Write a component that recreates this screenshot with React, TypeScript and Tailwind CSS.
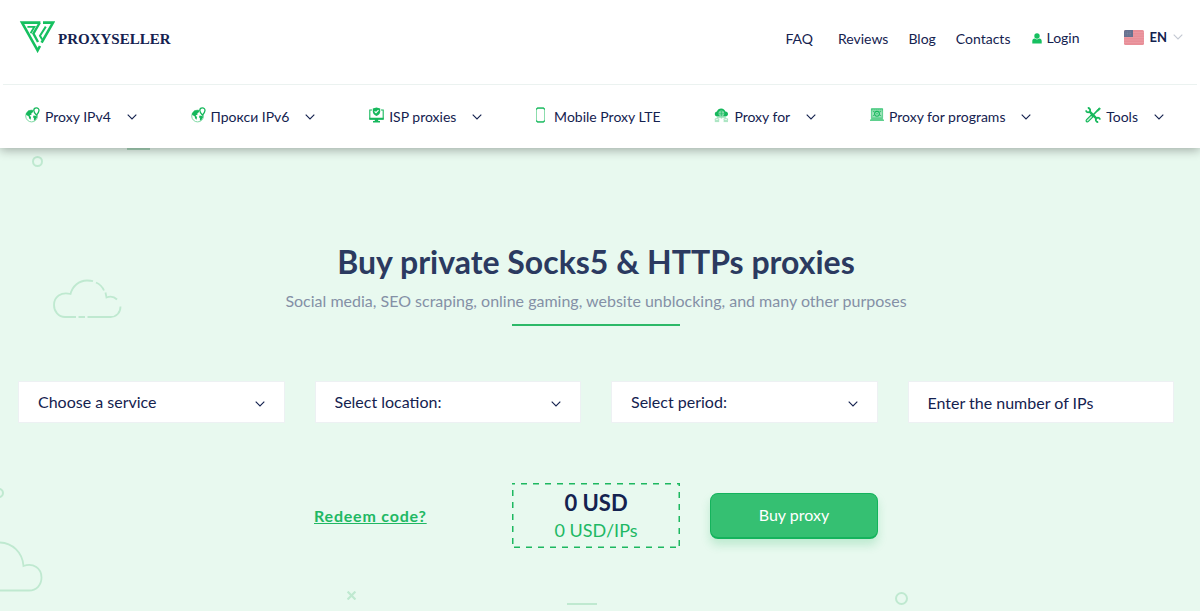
import { useState } from "react"

function Logo(){
    return(
        <svg className="w-9 h-[33px]" viewBox="0 0 36 33" fill="none" stroke="#16c060">
            <path d="M21.4 2.6H3L18.6 30.4L21 26" strokeWidth="2.6" />
            <path d="M8.4 6.8H15.4L11.6 13.2" strokeWidth="1.8" />
            <path d="M20.6 3L14.4 13.6L19 22" strokeWidth="2.4" />
            <path d="M24 2.6H34L22.6 22.6" strokeWidth="2.6" />
            <path d="M26.8 6.6L21 15.8L23.2 19.4" strokeWidth="2" />
        </svg>
    )
}

function Chevron({className}:any){
    return(
        <svg className={className} viewBox="0 0 10 6" fill="none" stroke="currentColor" strokeWidth="1.1">
            <path d="M0.7 0.7L5 5L9.3 0.7" />
        </svg>
    )
}

function GlobeIcon(){
    return(
        <svg className="w-[15px] h-4" viewBox="0 0 15 16">
            <circle cx="6.6" cy="9" r="5.9" fill="none" stroke="#7fd9a4" strokeWidth="1" />
            <path d="M1 6.5L3.4 3.6L7.6 3L8.2 5L6.4 6.2L6.6 7.4L4.6 8.4L6 10L5.6 12.8L4.2 11.4L3.6 9.2L1.2 8Z" fill="#16b85c" />
            <path d="M8.6 8.6L11.4 9L12.2 10L10.4 13L8.8 13.8L9 11.6L8 10Z" fill="#16b85c" />
            <path d="M11.4 0.9C9.8 0.9 8.8 2 8.8 3.4C8.8 5 11.4 8.2 11.4 8.2S14 5 14 3.4C14 2 13 0.9 11.4 0.9Z" fill="#fff" stroke="#16b85c" strokeWidth="1.3" />
        </svg>
    )
}

function IspIcon(){
    return(
        <svg className="w-[15px] h-4" viewBox="0 0 15 16">
            <path d="M3 3H0.8V12H14.2V3H12" fill="none" stroke="#16b85c" strokeWidth="1.1" />
            <path d="M0.4 10.8H14.6V12.8H0.4ZM5.8 12.8H9.2V14H11V15.4H4V14H5.8Z" fill="#16b85c" />
            <path d="M7.500 0.400L11.200 1.600V4.400C11.200 6.600 9.600 8 7.500 8.900C5.400 8 3.800 6.600 3.800 4.400V1.600Z" fill="#16b85c" />
            <path d="M5.6 4.3L7 5.7L9.5 3.1" fill="none" stroke="#fff" strokeWidth="1.1" />
        </svg>
    )
}

function MobileIcon(){
    return(
        <svg className="w-[13px] h-4" viewBox="0 0 13 16">
            <rect x="0.5" y="0.8" width="8" height="14.4" rx="1.2" fill="none" stroke="#7fd9a4" strokeWidth="0.9" />
            <path d="M1.4 0.4H7.6L8.8 1.6V2.8H8L7.4 1.8H1.6L1 2.8H0.2V1.6ZM0.2 13.2H1L1.600 14.2H7.4L8 13.2H8.8V14.6L7.6 15.6H1.4L0.2 14.6Z" fill="#16b85c" />
        </svg>
    )
}

function CloudIcon(){
    return(
        <svg className="w-[15px] h-4" viewBox="0 0 15 16">
            <path d="M3.4 9.4C1.6 9.4 0.8 8.2 0.8 7C0.8 5.6 1.8 4.8 3 4.6C3.4 2.6 5.2 1.4 7.2 1.4C9.4 1.4 11 2.8 11.4 4.6C13 4.6 14 5.6 14 7C14 8.4 13 9.4 11.4 9.4Z" fill="#16b85c" />
            <circle cx="7.4" cy="6.4" r="2.8" fill="#a6e4bf" />
            <path d="M4.6 6.4H10.2M7.4 3.6V9.2M5.200 4.9H9.6M5.2 7.9H9.6" stroke="#16b85c" strokeWidth="0.6" />
            <path d="M7.4 9.6V11.6M3 11.6V10.600H11.8V11.6" fill="none" stroke="#8fdcae" strokeWidth="0.8" />
            <path d="M1.2 11.8H4.8V13.6H1.2ZM10 11.8H13.6V13.6H10ZM0.8 14.6H5.2M9.6 14.6H14" fill="none" stroke="#8fdcae" strokeWidth="0.8" />
        </svg>
    )
}

function LaptopIcon(){
    return(
        <svg className="w-[14px] h-4" viewBox="0 0 14 16">
            <path d="M1.4 1.6H12.6V10.8H1.4Z" fill="#9ee2b9" stroke="#3ec679" strokeWidth="0.8" />
            <path d="M1.4 2.8H12.6" stroke="#16b85c" strokeWidth="0.9" strokeDasharray="1.4 0.6" />
            <circle cx="7" cy="6.8" r="2.4" fill="none" stroke="#16b85c" strokeWidth="1.1" />
            <circle cx="7" cy="6.8" r="0.7" fill="#16b85c" />
            <path d="M2.6 9L4.4 7.8M11.4 9L9.6 7.8M2.8 4.6H4.4M9.6 4.6H11.2" stroke="#16b85c" strokeWidth="0.8" />
            <path d="M1.4 11H12.6L14 13.2V14H0V13.2Z" fill="#5fd08e" />
        </svg>
    )
}

function ToolsIcon(){
    return(
        <svg className="w-4 h-4" viewBox="0 0 16 16" fill="none" stroke="#16b85c">
            <path d="M4.4 4.4L11.8 11.8" strokeWidth="2.4" />
            <path d="M1 3.4C1.2 4.8 2.4 5.6 3.8 5.2C5 4.8 5.4 3.6 5 2.4C4.6 1.4 3.6 0.9 2.8 1" strokeWidth="1.8" />
            <path d="M15 12.6C14.8 11.2 13.6 10.4 12.2 10.8C11 11.2 10.6 12.4 11 13.6C11.4 14.6 12.4 15.1 13.2 15" strokeWidth="1.8" />
            <path d="M6.8 9.2L12.6 3.4" strokeWidth="1.6" />
            <path d="M12 4L12.4 2.6L14.4 0.8L15.4 1.8L13.6 3.8Z" fill="#16b85c" strokeWidth="0.8" />
            <path d="M6.2 8L8 9.8L3.4 14.4C2.8 15 2 15 1.5 14.5S1 13.2 1.6 12.6Z" fill="#c9f0d8" strokeWidth="1.2" />
        </svg>
    )
}

function Flag(){
    return(
        <svg className="w-5 h-[15px]" viewBox="0 0 20 15">
            <rect width="20" height="15" rx="1.5" fill="#e88f98" />
            <path d="M0 2.5H20M0 5H20M0 7.5H20M0 10H20M0 12.5H20" stroke="#eb9ca4" strokeWidth="0.8" />
            <path d="M0 1.5Q0 0 1.5 0H9V7H0Z" fill="#65708f" />
            <path d="M1.5 2H8M1.5 3.5H8M1.5 5H8" stroke="#8993ab" strokeWidth="0.6" strokeDasharray="0.8 0.8" />
        </svg>
    )
}

function TopBar(){
    return(
        <div className="mx-[3px] flex h-[85px] items-start justify-between border-b border-[#ebf2f0] pl-4 pr-[14px]">
            <a className="mt-5 flex items-center gap-[3px]" href="#">
                <Logo />
                <span className="pt-1 font-['Liberation_Serif',serif] text-[15px] font-bold leading-5">PROXYSELLER</span>
            </a>
            <div className="mt-[27px] flex items-start text-sm leading-5">
                <nav className="mt-[2px] flex gap-5">
                    <a className="mr-[5px]" href="#">FAQ</a>
                    <a href="#">Reviews</a>
                    <a href="#">Blog</a>
                    <a href="#">Contacts</a>
                </nav>
                <a className="ml-[22px] mt-px flex items-center gap-1" href="#">
                    <svg className="w-[10px] h-[11px]" viewBox="0 0 10 11" fill="#16c060">
                        <circle cx="5" cy="3" r="2.7" />
                        <path d="M0.3 10.4V8C0.3 6.6 1.2 5.8 2.6 5.6C3.9 6.7 6.1 6.7 7.4 5.6C8.8 5.8 9.7 6.6 9.7 8V10.4Z" />
                    </svg>
                    Login
                </a>
                <button className="ml-11 flex cursor-pointer items-center gap-[6px] text-[13px] font-bold">
                    <Flag />
                    EN
                    <Chevron className="w-[10px] h-[6px] text-[#c3c8d2]" />
                </button>
            </div>
        </div>
    )
}

const menu = [
    {label: "Proxy IPv4", icon: GlobeIcon, arrow: true},
    {label: "Прокси IPv6", icon: GlobeIcon, arrow: true},
    {label: "ISP proxies", icon: IspIcon, arrow: true},
    {label: "Mobile Proxy LTE", icon: MobileIcon, arrow: false},
    {label: "Proxy for", icon: CloudIcon, arrow: true},
    {label: "Proxy for programs", icon: LaptopIcon, arrow: true},
    {label: "Tools", icon: ToolsIcon, arrow: true},
]

function MainMenu(){
    return(
        <nav className="flex h-[63px] items-center justify-between pl-[25px] pr-9 text-sm leading-5">
            {menu.map(({label, icon: Icon, arrow}) => (
                <button key={label} className="flex cursor-pointer items-center">
                    <span className="mb-1 mr-[5px]"><Icon /></span>
                    {label}
                    {arrow && <Chevron className="ml-4 w-[10px] h-[6px]" />}
                </button>
            ))}
        </nav>
    )
}

function SelectBox({label}:any){
    return(
        <div className="relative">
            <select aria-label={label} className="h-[42px] w-full cursor-pointer appearance-none border border-[#edf1f3] bg-white pl-[19px] pr-10 text-base outline-none">
                <option>{label}</option>
            </select>
            <Chevron className="pointer-events-none absolute right-5 top-5 w-[10px] h-[6px]" />
        </div>
    )
}

function Decorations(){
    return(
        <div className="pointer-events-none absolute inset-0 text-[#bfe9d0]" aria-hidden="true">
            <div className="absolute left-[127px] top-0 h-[2px] w-[23px] bg-[#a9d6bb]"></div>
            <div className="absolute left-8 top-2 h-[11px] w-[11px] rounded-full border-2 border-current"></div>
            <svg className="absolute left-[52px] top-[130px] w-[70px] h-[41px]" viewBox="0 0 70 41" fill="none" stroke="currentColor" strokeWidth="1.8">
                <path d="M24 39H13C6.5 39 2 33.5 2 27C2 19 9 13.5 18.5 16C20.5 8 27 2.5 35 2.5C37 2.5 39 2.6 41 3.2" />
                <path d="M44 4.5C48 6.3 50.5 9 52 12.5M53.5 14.5L54.5 19.5C58.5 18 62.5 19 65 21.5M68.5 28.5C68.5 34.5 64.5 39 58.5 39H35.5M33 39H26.5" />
            </svg>
            <div className="absolute -left-[6px] top-[340px] h-[10px] w-[10px] rounded-full border-2 border-current"></div>
            <svg className="absolute left-0 top-[392px] w-[44px] h-[52px]" viewBox="0 0 44 52" fill="none" stroke="currentColor" strokeWidth="1.8">
                <path d="M0 2.5C12 3 22.5 12 23.5 26C33.5 22.5 41.5 28.5 41.5 37.5C41.5 45 36.5 50.5 29 50.5H0" />
            </svg>
            <svg className="absolute left-[347px] top-[443px] w-[9px] h-[9px]" viewBox="0 0 8 8" stroke="currentColor" strokeWidth="2">
                <path d="M0.5 0.5L7.5 7.5M7.5 0.5L0.5 7.5" />
            </svg>
            <div className="absolute left-[567px] top-[455px] h-[2px] w-[30px] bg-current"></div>
            <div className="absolute left-[895px] top-[444px] h-[13px] w-[13px] rounded-full border-2 border-current"></div>
        </div>
    )
}

function Hero(){
    const [ips, setIps] = useState("")

    return(
        <main className="relative flex-1 overflow-hidden pb-14 pl-[18px] pr-[26px] pt-[94px]">
            <Decorations />
            <div className="relative">
                <h1 className="text-center text-[32px] font-bold leading-10 text-[#2b3a60]">Buy private Socks5 &amp; HTTPs proxies</h1>
                <p className="mt-[7px] text-center text-base leading-6 text-[#8490a6]">Social media, SEO scraping, online gaming, website unblocking, and many other purposes</p>
                <div className="mx-auto mt-[11px] h-[2px] w-[168px] bg-[#2cb968]"></div>

                <form onSubmit={(e) => e.preventDefault()}>
                    <div className="mt-[55px] grid grid-cols-4 gap-[30px]">
                        <SelectBox label="Choose a service" />
                        <SelectBox label="Select location:" />
                        <SelectBox label="Select period:" />
                        <input
                            aria-label="Enter the number of IPs"
                            className="h-[42px] w-full border border-[#edf1f3] bg-white px-[19px] text-base outline-none placeholder:text-[#14224f]"
                            placeholder="Enter the number of IPs"
                            value={ips}
                            onChange={(e) => setIps(e.target.value)}
                        />
                    </div>
                    <div className="mx-auto mt-[60px] grid max-w-[564px] grid-cols-3 items-center gap-[30px]">
                        <a className="justify-self-start whitespace-nowrap text-base font-bold leading-6 tracking-wider text-[#20b863] underline" href="#">Redeem code?</a>
                        <div className="relative flex h-[65px] flex-col items-center justify-center">
                            <svg className="absolute inset-0 h-full w-full" fill="none" stroke="#1db860" strokeWidth="3" strokeDasharray="6 6" strokeDashoffset="3">
                                <rect width="100%" height="100%" />
                            </svg>
                            <span className="text-[22px] font-bold leading-7">0 USD</span>
                            <span className="text-lg leading-[26px] text-[#20b863]">0 USD/IPs</span>
                        </div>
                        <button className="h-[46px] cursor-pointer rounded-lg border border-b-2 border-[#14b35c] bg-[#35c072] text-base text-white shadow-[0_6px_10px_rgba(40,180,100,0.22)]">Buy proxy</button>
                    </div>
                </form>
            </div>
        </main>
    )
}

export default function App(){
    return(
        <div className="flex min-h-screen flex-col bg-[#e8f9ef] font-[Lato,sans-serif] text-[#14224f]">
            <header className="relative z-10 bg-white shadow-[0_2px_10px_rgba(0,0,0,0.32)]">
                <TopBar />
                <MainMenu />
            </header>
            <Hero />
        </div>
    )
}
